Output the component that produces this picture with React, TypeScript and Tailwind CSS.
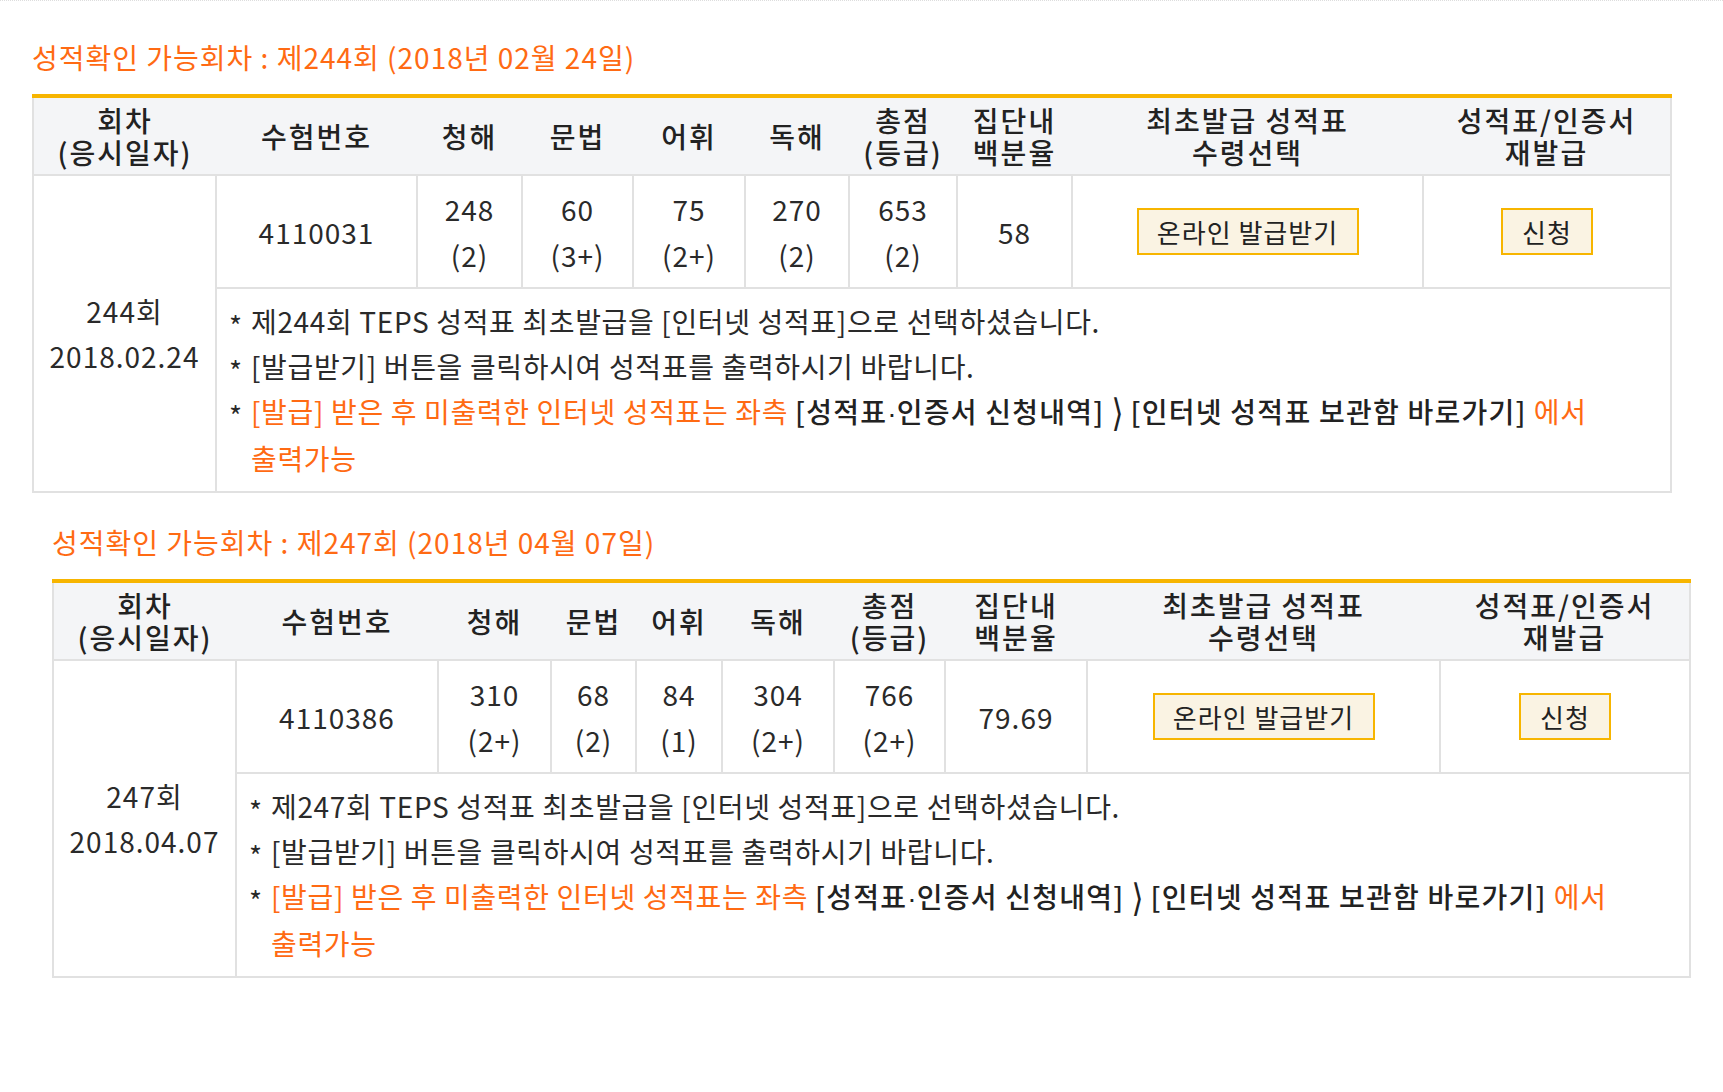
import React from "react";

type Row = {
  round: string;
  date: string;
  examNo: string;
  scores: [string, string][];
  pct: string;
};

const FONT = { fontFamily: '"Noto Sans CJK KR", "Noto Sans", sans-serif' };

function Bullet({ children }: { children: React.ReactNode }) {
  return (
    <div className="flex">
      <span className="w-[22px] shrink-0 relative top-[4px] tracking-normal">*</span>
      <span>{children}</span>
    </div>
  );
}

function Section({
  title,
  cols,
  row,
  className,
}: {
  title: string;
  cols: number[];
  row: Row;
  className: string;
}) {
  const th = "font-medium text-[#222] leading-[32px] text-center align-middle px-0 tracking-[2px]";
  const td = "border-2 border-[#e1e1e1] text-center align-middle";
  return (
    <div className={className}>
      <div className="text-[28px] leading-[40px] tracking-[1px] text-[#ff6a13] mb-[17px]">{title}</div>
      <table className="table-fixed border-collapse w-full text-[28px] tracking-[1px] text-[#2a2a2a]">
        <colgroup>
          {cols.map((w, i) => (
            <col key={i} style={{ width: w }} />
          ))}
        </colgroup>
        <thead>
          <tr className="h-[79px] bg-[#f4f5f7] border-t-[4px] border-t-[#f7b500] border-b-2 border-b-[#e1e1e1] border-x-2 border-x-[#e1e1e1]">
            <th className={th}>
              회차
              <br />
              (응시일자)
            </th>
            <th className={th}>수험번호</th>
            <th className={th}>청해</th>
            <th className={th}>문법</th>
            <th className={th}>어휘</th>
            <th className={th}>독해</th>
            <th className={th}>
              총점
              <br />
              (등급)
            </th>
            <th className={th}>
              집단내
              <br />
              백분율
            </th>
            <th className={th}>
              최초발급 성적표
              <br />
              수령선택
            </th>
            <th className={th}>
              성적표/인증서
              <br />
              재발급
            </th>
          </tr>
        </thead>
        <tbody>
          <tr className="h-[113px]">
            <td rowSpan={2} className={`${td} leading-[45px]`}>
              {row.round}
              <br />
              {row.date}
            </td>
            <td className={td}>{row.examNo}</td>
            {row.scores.map(([s, g], i) => (
              <td key={i} className={`${td} leading-[46px]`}>
                {s}
                <br />
                {g}
              </td>
            ))}
            <td className={td}>{row.pct}</td>
            <td className={td}>
              <div className="mx-auto w-[222px] h-[47px] flex items-center justify-center bg-[#faf3e3] border-2 border-[#f7b500] text-[26px] text-[#222]">
                온라인 발급받기
              </div>
            </td>
            <td className={td}>
              <div className="mx-auto w-[92px] h-[47px] flex items-center justify-center bg-[#faf3e3] border-2 border-[#f7b500] text-[26px] text-[#222]">
                신청
              </div>
            </td>
          </tr>
          <tr>
            <td colSpan={9} className="border-2 border-[#e1e1e1] text-left align-top pl-[12px] pr-[12px] pt-[10px] pb-[10px] leading-[45px] tracking-[0.65px]">
              <Bullet>제{row.round.replace("회", "")}회 TEPS 성적표 최초발급을 [인터넷 성적표]으로 선택하셨습니다.</Bullet>
              <Bullet>[발급받기] 버튼을 클릭하시여 성적표를 출력하시기 바랍니다.</Bullet>
              <Bullet>
                <span className="text-[#ff6a13]">[발급] 받은 후 미출력한 인터넷 성적표는 좌측</span>{" "}
                <span className="font-medium text-[#222] tracking-[1.25px]">
                  [성적표<span className="font-['Liberation_Sans'] tracking-normal">·</span>인증서 신청내역]{" "}
                  <span className="inline-block font-['DejaVu_Sans'] font-normal tracking-normal scale-y-[1.35] scale-x-[1.1]">⟩</span> [인터넷 성적표 보관함 바로가기]
                </span>{" "}
                <span className="text-[#ff6a13]">
                  에서
                  <br />
                  출력가능
                </span>
              </Bullet>
            </td>
          </tr>
        </tbody>
      </table>
    </div>
  );
}

export default function App() {
  return (
    <div className="min-h-[1092px] bg-white border-t border-dotted border-[#dddddd] pt-[36px]" style={FONT}>
      <Section
        className="ml-[32px] w-[1638px]"
        title="성적확인 가능회차 : 제244회 (2018년 02월 24일)"
        cols={[183, 201, 105, 111, 112, 104, 108, 115, 351, 248]}
        row={{
          round: "244회",
          date: "2018.02.24",
          examNo: "4110031",
          scores: [
            ["248", "(2)"],
            ["60", "(3+)"],
            ["75", "(2+)"],
            ["270", "(2)"],
            ["653", "(2)"],
          ],
          pct: "58",
        }}
      />
      <div className="h-[29px]" />
      <Section
        className="ml-[52px] w-[1637px]"
        title="성적확인 가능회차 : 제247회 (2018년 04월 07일)"
        cols={[183, 202, 113, 85, 86, 112, 111, 142, 353, 250]}
        row={{
          round: "247회",
          date: "2018.04.07",
          examNo: "4110386",
          scores: [
            ["310", "(2+)"],
            ["68", "(2)"],
            ["84", "(1)"],
            ["304", "(2+)"],
            ["766", "(2+)"],
          ],
          pct: "79.69",
        }}
      />
    </div>
  );
}
